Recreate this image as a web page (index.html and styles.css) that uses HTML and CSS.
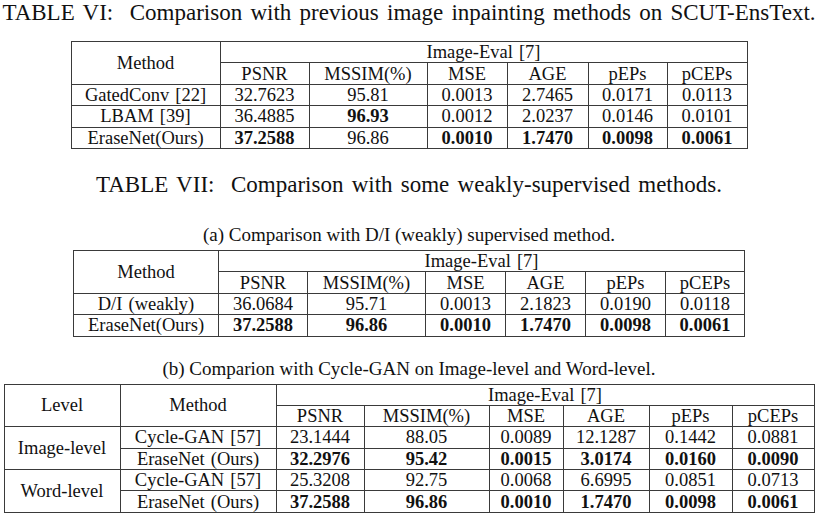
FILE: index.html
```html
<!DOCTYPE html>
<html>
<head>
<meta charset="utf-8">
<link rel="stylesheet" href="styles.css">
</head>
<body>
<div class="page">
  <div class="caption cap1">TABLE VI:&nbsp; Comparison with previous image inpainting methods on SCUT-EnsText.</div>
  <table class="tbl t1">
    <colgroup><col style="width:149px"><col style="width:89px"><col style="width:118px"><col style="width:80px"><col style="width:81px"><col style="width:79px"><col style="width:80px"></colgroup>
    <tr><td rowspan="2">Method</td><td colspan="6">Image-Eval [7]</td></tr>
    <tr><td>PSNR</td><td>MSSIM(%)</td><td>MSE</td><td>AGE</td><td>pEPs</td><td>pCEPs</td></tr>
    <tr class="sep"><td>GatedConv [22]</td><td>32.7623</td><td>95.81</td><td>0.0013</td><td>2.7465</td><td>0.0171</td><td>0.0113</td></tr>
    <tr><td>LBAM [39]</td><td>36.4885</td><td><b>96.93</b></td><td>0.0012</td><td>2.0237</td><td>0.0146</td><td>0.0101</td></tr>
    <tr><td>EraseNet(Ours)</td><td><b>37.2588</b></td><td>96.86</td><td><b>0.0010</b></td><td><b>1.7470</b></td><td><b>0.0098</b></td><td><b>0.0061</b></td></tr>
  </table>

  <div class="caption cap2">TABLE VII:&nbsp; Comparison with some weakly-supervised methods.</div>
  <div class="subcap suba">(a) Comparison with D/I (weakly) supervised method.</div>
  <table class="tbl t2">
    <colgroup><col style="width:145px"><col style="width:89px"><col style="width:118px"><col style="width:80px"><col style="width:80px"><col style="width:80px"><col style="width:79px"></colgroup>
    <tr><td rowspan="2">Method</td><td colspan="6">Image-Eval [7]</td></tr>
    <tr><td>PSNR</td><td>MSSIM(%)</td><td>MSE</td><td>AGE</td><td>pEPs</td><td>pCEPs</td></tr>
    <tr><td>D/I (weakly)</td><td>36.0684</td><td>95.71</td><td>0.0013</td><td>2.1823</td><td>0.0190</td><td>0.0118</td></tr>
    <tr><td>EraseNet(Ours)</td><td><b>37.2588</b></td><td><b>96.86</b></td><td><b>0.0010</b></td><td><b>1.7470</b></td><td><b>0.0098</b></td><td><b>0.0061</b></td></tr>
  </table>

  <div class="subcap subb">(b) Comparion with Cycle-GAN on Image-level and Word-level.</div>
  <table class="tbl t3">
    <colgroup><col style="width:116px"><col style="width:156px"><col style="width:88px"><col style="width:125px"><col style="width:74px"><col style="width:86px"><col style="width:83px"><col style="width:82px"></colgroup>
    <tr><td rowspan="2">Level</td><td rowspan="2">Method</td><td colspan="6">Image-Eval [7]</td></tr>
    <tr><td>PSNR</td><td>MSSIM(%)</td><td>MSE</td><td>AGE</td><td>pEPs</td><td>pCEPs</td></tr>
    <tr><td rowspan="2">Image-level</td><td>Cycle-GAN [57]</td><td>23.1444</td><td>88.05</td><td>0.0089</td><td>12.1287</td><td>0.1442</td><td>0.0881</td></tr>
    <tr><td>EraseNet (Ours)</td><td><b>32.2976</b></td><td><b>95.42</b></td><td><b>0.0015</b></td><td><b>3.0174</b></td><td><b>0.0160</b></td><td><b>0.0090</b></td></tr>
    <tr><td rowspan="2">Word-level</td><td>Cycle-GAN [57]</td><td>25.3208</td><td>92.75</td><td>0.0068</td><td>6.6995</td><td>0.0851</td><td>0.0713</td></tr>
    <tr><td>EraseNet (Ours)</td><td><b>37.2588</b></td><td><b>96.86</b></td><td><b>0.0010</b></td><td><b>1.7470</b></td><td><b>0.0098</b></td><td><b>0.0061</b></td></tr>
  </table>
</div>
</body>
</html>
```

FILE: styles.css
```css
html, body {
  margin: 0;
  padding: 0;
  background: #ffffff;
}
body {
  font-family: "Liberation Serif", "Times New Roman", serif;
  color: #111111;
}
.page {
  width: 818px;
  display: flex;
  flex-direction: column;
  align-items: center;
}
.caption {
  font-size: 23px;
  line-height: 26px;
  word-spacing: 2.5px;
  white-space: nowrap;
}
.cap1 {
  margin-top: 0;
}
.cap2 {
  margin-top: 23px;
}
.subcap {
  font-size: 19px;
  line-height: 22px;
  white-space: nowrap;
}
.suba {
  margin-top: 26px;
}
.subb {
  margin-top: 21px;
}
.tbl {
  border-collapse: collapse;
  table-layout: fixed;
  font-size: 18.5px;
  word-spacing: 1.5px;
}
.tbl td {
  border: 1px solid #3a3a3a;
  padding: 0;
  height: 20.4px;
  line-height: 20px;
  text-align: center;
  white-space: nowrap;
}
.tbl b {
  font-weight: bold;
}
.t1 {
  margin-top: 15px;
}
.t2 {
  margin-top: 4px;
}
.t3 {
  margin-top: 4px;
}
```
